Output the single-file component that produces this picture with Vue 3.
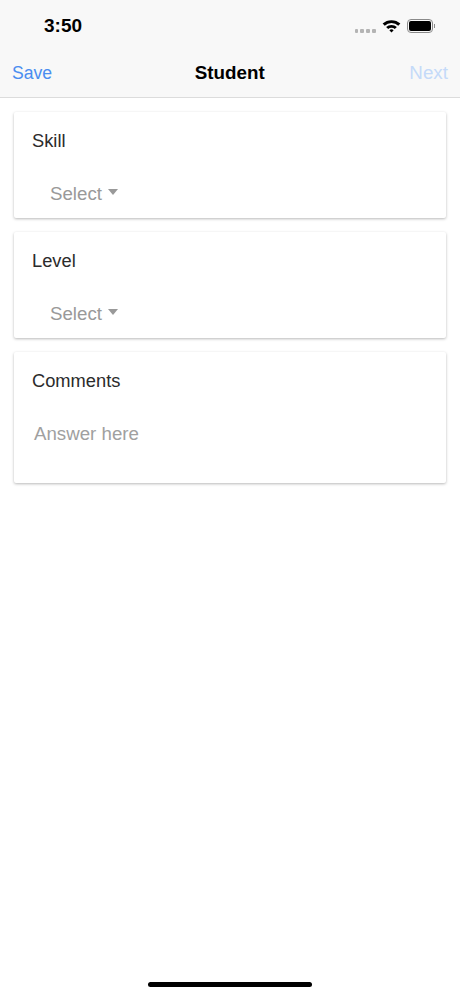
<template>
  <div class="screen">
    <div class="top-bar">
      <div class="status-bar">
        <span class="time">3:50</span>
        <div class="status-icons">
          <!-- signal dots -->
          <div class="signal">
            <i v-for="n in 4" :key="n"></i>
          </div>
          <svg class="wifi" width="19" height="14" viewBox="0 0 18 14" preserveAspectRatio="none">
            <path d="M0.6 4.6 A12 12 0 0 1 17.4 4.6 L15.4 6.7 A9.2 9.2 0 0 0 2.6 6.7 Z" fill="#000" />
            <path d="M3.9 8 A7.3 7.3 0 0 1 14.1 8 L12.1 10.1 A4.4 4.4 0 0 0 5.9 10.1 Z" fill="#000" />
            <path d="M7 11.2 A2.8 2.8 0 0 1 11 11.2 L9 13.4 Z" fill="#000" />
          </svg>
          <div class="battery">
            <div class="battery-fill"></div>
          </div>
          <div class="battery-cap"></div>
        </div>
      </div>
      <div class="nav-bar">
        <span class="nav-btn save">Save</span>
        <span class="nav-title">Student</span>
        <span class="nav-btn next">Next</span>
      </div>
    </div>

    <div class="cards">
      <div v-for="field in fields" :key="field.label" class="card">
        <div class="card-label">{{ field.label }}</div>
        <div v-if="field.type === 'select'" class="select">
          <span>Select</span>
          <span class="caret"></span>
        </div>
        <div v-else class="answer">Answer here</div>
      </div>
    </div>

    <div class="home-indicator"></div>
  </div>
</template>

<script setup>
const fields = [
  { label: "Skill", type: "select" },
  { label: "Level", type: "select" },
  { label: "Comments", type: "text" },
];
</script>

<style>
html,
body {
  margin: 0;
  background: #fff;
}
</style>

<style scoped>
.screen {
  position: relative;
  width: 460px;
  height: 996px;
  overflow: hidden;
  background: #fff;
  font-family: "Liberation Sans", Arial, sans-serif;
}

.top-bar {
  height: 98px;
  box-sizing: border-box;
  background: #f8f8f8;
  border-bottom: 1px solid #dcdcdc;
}

.status-bar {
  height: 49px;
  display: flex;
  justify-content: space-between;
  align-items: center;
  padding: 2px 25px 0 44px;
  box-sizing: border-box;
}

.time {
  font-size: 19px;
  font-weight: 700;
  color: #000;
}

.status-icons {
  display: flex;
  align-items: center;
}

.signal {
  display: flex;
  gap: 2px;
  margin-top: 10px;
  margin-right: 6px;
}

.signal i {
  display: block;
  width: 3.75px;
  height: 4px;
  border-radius: 1px;
  background: #b4b4b4;
}

.wifi {
  margin-right: 6px;
}

.battery {
  width: 26px;
  height: 14px;
  box-sizing: border-box;
  border: 1px solid #8a8a8a;
  border-radius: 4px;
  padding: 1px;
}

.battery-fill {
  height: 100%;
  background: #000;
  border-radius: 2px;
}

.battery-cap {
  width: 1.5px;
  height: 4px;
  margin-left: 1px;
  background: #8a8a8a;
}

.nav-bar {
  height: 48px;
  display: flex;
  justify-content: space-between;
  align-items: center;
  padding: 0 12px;
}

.nav-btn {
  font-size: 17.6px;
}

.save {
  color: #4a8df0;
}

.next {
  font-size: 18.8px;
  color: #c4daf9;
}

.nav-title {
  margin-right: 2px;
  font-size: 18.8px;
  font-weight: 700;
  color: #000;
}

.cards {
  padding: 14px 14px 0;
  display: flex;
  flex-direction: column;
  gap: 14px;
}

.card {
  background: #fff;
  border-radius: 2px;
  padding: 19px 18px 0;
  box-sizing: border-box;
  height: 106px;
  box-shadow: 0 1px 3px rgba(0, 0, 0, 0.28);
}

.card:last-child {
  height: 131px;
}

.card-label {
  font-size: 18.3px;
  line-height: 20px;
  color: #2b2b2b;
}

.select {
  display: flex;
  align-items: center;
  margin-top: 33px;
  padding-left: 18px;
  font-size: 18.7px;
  line-height: 20px;
  color: #999;
}

.caret {
  width: 0;
  height: 0;
  margin-left: 6px;
  margin-top: -4px;
  border-left: 5.5px solid transparent;
  border-right: 5.5px solid transparent;
  border-top: 6px solid #999;
}

.answer {
  margin-top: 33px;
  padding-left: 2px;
  font-size: 18.7px;
  line-height: 20px;
  color: #a0a0a0;
}

.home-indicator {
  position: absolute;
  left: 148px;
  bottom: 9px;
  width: 164px;
  height: 5px;
  border-radius: 3px;
  background: #000;
}
</style>
